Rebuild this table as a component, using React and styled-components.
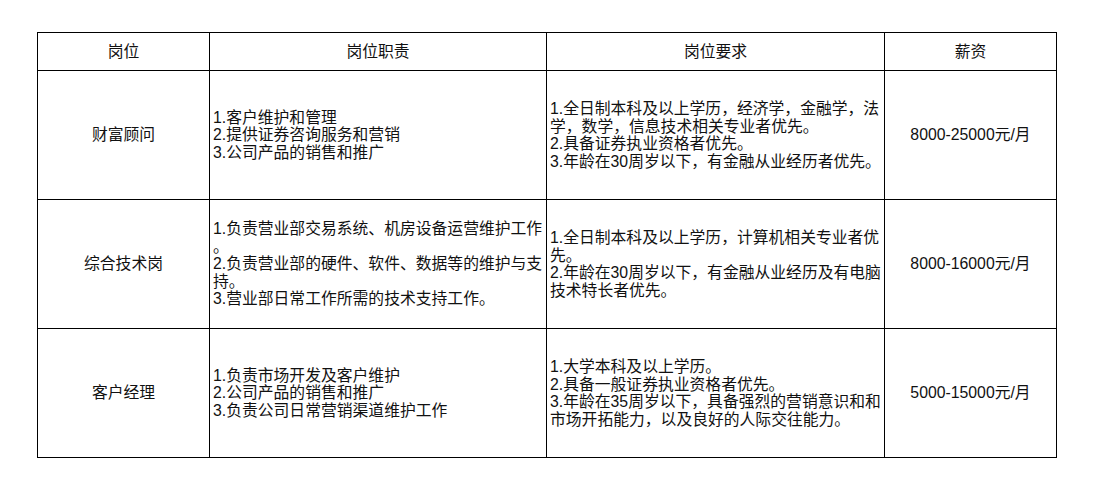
import React from "react";
import styled, { createGlobalStyle } from "styled-components";

const Global = createGlobalStyle`
  html, body { margin: 0; padding: 0; background: #fff; }
  body {
    font-family: "Liberation Sans", "Noto Sans CJK SC", sans-serif;
    color: #111;
  }
`;

const Page = styled.div`
  padding: 32px 0 0 37px;
`;

const Table = styled.table`
  border-collapse: collapse;
  table-layout: fixed;
  width: 1020px;
  font-size: 15.8px;
  line-height: 17.5px;
`;

const Col = styled.col`
  width: ${(p) => p.$w}px;
`;

const HeadRow = styled.tr`
  height: 38px;
`;

const BodyRow = styled.tr`
  height: 129px;
`;

const Th = styled.th`
  border: 1px solid #000;
  font-weight: normal;
  text-align: center;
  vertical-align: middle;
  padding: 0;
`;

const Td = styled.td`
  border: 1px solid #000;
  vertical-align: middle;
  text-align: ${(p) => (p.$center ? "center" : "left")};
  padding: ${(p) => (p.$center ? "0" : "0 1px 0 3px")};
  word-break: break-all;
  line-break: anywhere;
`;

const Line = styled.div``;

const rows = [
  {
    title: "财富顾问",
    duty: ["1.客户维护和管理", "2.提供证券咨询服务和营销", "3.公司产品的销售和推广"],
    req: [
      "1.全日制本科及以上学历，经济学，金融学，法学，数学，信息技术相关专业者优先。",
      "2.具备证券执业资格者优先。",
      "3.年龄在30周岁以下，有金融从业经历者优先。",
    ],
    pay: "8000-25000元/月",
  },
  {
    title: "综合技术岗",
    duty: [
      "1.负责营业部交易系统、机房设备运营维护工作。",
      "2.负责营业部的硬件、软件、数据等的维护与支持。",
      "3.营业部日常工作所需的技术支持工作。",
    ],
    req: [
      "1.全日制本科及以上学历，计算机相关专业者优先。",
      "2.年龄在30周岁以下，有金融从业经历及有电脑技术特长者优先。",
    ],
    pay: "8000-16000元/月",
  },
  {
    title: "客户经理",
    duty: ["1.负责市场开发及客户维护", "2.公司产品的销售和推广", "3.负责公司日常营销渠道维护工作"],
    req: [
      "1.大学本科及以上学历。",
      "2.具备一般证券执业资格者优先。",
      "3.年龄在35周岁以下，具备强烈的营销意识和和市场开拓能力，以及良好的人际交往能力。",
    ],
    pay: "5000-15000元/月",
  },
];

export default function App() {
  return (
    <Page>
      <Global />
      <Table>
        <colgroup>
          <Col $w={172} />
          <Col $w={337} />
          <Col $w={338} />
          <Col $w={172} />
        </colgroup>
        <thead>
          <HeadRow>
            <Th>岗位</Th>
            <Th>岗位职责</Th>
            <Th>岗位要求</Th>
            <Th>薪资</Th>
          </HeadRow>
        </thead>
        <tbody>
          {rows.map((r) => (
            <BodyRow key={r.title}>
              <Td $center>{r.title}</Td>
              <Td>
                {r.duty.map((d) => (
                  <Line key={d}>{d}</Line>
                ))}
              </Td>
              <Td>
                {r.req.map((d) => (
                  <Line key={d}>{d}</Line>
                ))}
              </Td>
              <Td $center>{r.pay}</Td>
            </BodyRow>
          ))}
        </tbody>
      </Table>
    </Page>
  );
}
